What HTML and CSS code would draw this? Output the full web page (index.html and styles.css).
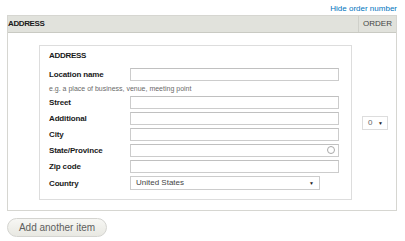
FILE: index.html
```html
<!DOCTYPE html>
<html>
<head>
<meta charset="utf-8">
<link rel="stylesheet" href="styles.css">
</head>
<body>
<div class="page">
  <div class="toplinks"><a class="link" href="#">Hide order number</a></div>
  <div class="table">
    <div class="thead">
      <div class="th th-main">ADDRESS</div>
      <div class="th th-order">ORDER</div>
    </div>
    <div class="trow">
      <div class="cell-main">
        <div class="fieldset">
          <div class="legend">ADDRESS</div>
          <div class="row"><span class="label">Location name</span><span class="input"></span></div>
          <div class="help">e.g. a place of business, venue, meeting point</div>
          <div class="row"><span class="label">Street</span><span class="input"></span></div>
          <div class="row"><span class="label">Additional</span><span class="input"></span></div>
          <div class="row"><span class="label">City</span><span class="input"></span></div>
          <div class="row"><span class="label">State/Province</span><span class="input input-ac"><span class="throbber"></span></span></div>
          <div class="row"><span class="label">Zip code</span><span class="input"></span></div>
          <div class="row row-last"><span class="label">Country</span><span class="select">United States<span class="arrow">▼</span></span></div>
        </div>
      </div>
      <div class="cell-order">
        <span class="weight">0<span class="arrow">▼</span></span>
      </div>
    </div>
  </div>
  <div class="actions"><span class="button">Add another item</span></div>
</div>
</body>
</html>
```
FILE: styles.css
```css
html, body {
  margin: 0;
  padding: 0;
  background: #fff;
}
body {
  font-family: "Liberation Sans", Arial, sans-serif;
  color: #333;
}
.page {
  padding: 3px 8px 0 7px;
}
.toplinks {
  text-align: right;
  font-size: 8px;
  line-height: 11px;
  height: 12px;
}
.link {
  color: #0074bd;
  text-decoration: none;
}
.table {
  border: 1px solid #d6d6d1;
  border-top: none;
}
.thead {
  display: grid;
  grid-template-columns: 350px 1fr;
  background: #e1e2dc;
  border-top: 1px solid #d6d6d1;
  border-bottom: 1px solid #c9cac3;
  height: 16px;
}
.th {
  font-size: 8px;
  line-height: 16px;
}
.th-main {
  font-weight: bold;
  color: #1a1a1a;
  letter-spacing: -0.4px;
}
.th-order {
  border-left: 1px solid #cfd0ca;
  text-align: center;
  color: #444;
  font-size: 8px;
}
.trow {
  display: grid;
  grid-template-columns: 350px 1fr;
  height: 177px;
}
.cell-main {
  padding: 12px 6px 0 31px;
}
.cell-order {
  display: flex;
  align-items: center;
  padding-left: 4px;
  padding-top: 2px;
}
.fieldset {
  border: 1px solid #ddd;
  height: 148px;
  padding: 5px 12px 0 9px;
}
.legend {
  font-size: 8px;
  font-weight: bold;
  line-height: 10px;
  color: #1a1a1a;
  letter-spacing: -0.3px;
  margin-bottom: 7px;
}
.row {
  display: flex;
  align-items: center;
  height: 13px;
  margin-bottom: 3px;
}
.label {
  width: 81px;
  flex: none;
  font-size: 8px;
  font-weight: bold;
  color: #1a1a1a;
  letter-spacing: -0.15px;
}
.input {
  flex: 1;
  height: 11px;
  border: 1px solid #ccc;
  border-top-color: #c0c0c0;
  background: #fff;
  position: relative;
}
.throbber {
  position: absolute;
  right: 3px;
  top: 1px;
  width: 6px;
  height: 6px;
  border: 1px solid #a8a8a8;
  border-radius: 50%;
}
.help {
  font-size: 7px;
  color: #6a6a6a;
  line-height: 11px;
  margin: -1px 0 2px;
}
.row-last {
  height: 14px;
}
.select {
  width: 183px;
  height: 12px;
  border: 1px solid #ccc;
  font-size: 8px;
  line-height: 12px;
  color: #444;
  padding-left: 5px;
  position: relative;
  background: #fff;
}
.select .arrow {
  position: absolute;
  right: 5px;
  top: 0;
  font-size: 5px;
  color: #222;
}
.weight {
  display: inline-block;
  position: relative;
  width: 19px;
  height: 12px;
  border: 1px solid #ddd;
  font-size: 8px;
  line-height: 12px;
  color: #666;
  padding-left: 5px;
}
.weight .arrow {
  position: absolute;
  right: 4px;
  top: 0;
  font-size: 5px;
  color: #222;
}
.actions {
  padding-top: 6px;
}
.button {
  display: inline-block;
  width: 98px;
  height: 17px;
  border: 1px solid #d4d4d0;
  border-radius: 10px;
  background: linear-gradient(#f7f7f4, #e8e8e2);
  color: #5e5e5e;
  font-size: 10px;
  line-height: 17px;
  text-align: center;
}
```
